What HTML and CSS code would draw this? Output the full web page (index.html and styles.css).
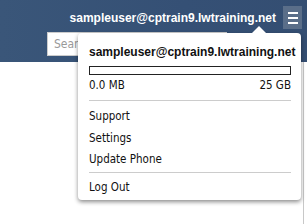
FILE: index.html
```html
<!DOCTYPE html>
<html>
<head>
<meta charset="utf-8">
<link rel="stylesheet" href="styles.css">
</head>
<body>
<header class="topbar">
  <div class="toprow">
    <span class="user">sampleuser@cptrain9.lwtraining.net</span>
    <button class="burger" aria-label="Menu">
      <span></span><span></span><span></span>
    </button>
  </div>
  <div class="searchrow">
    <input class="search" type="text" placeholder="Search">
  </div>
</header>
<main class="content"></main>

<div class="dropdown">
  <div class="arrow"></div>
  <div class="email">sampleuser@cptrain9.lwtraining.net</div>
  <div class="quota"><div class="fill" style="width:0%"></div></div>
  <div class="quota-labels"><span>0.0 MB</span><span>25 GB</span></div>
  <hr class="divider first">
  <a class="item">Support</a>
  <a class="item">Settings</a>
  <a class="item">Update Phone</a>
  <hr class="divider second">
  <a class="item">Log Out</a>
</div>
</body>
</html>
```

FILE: styles.css
```css
html, body {
  margin: 0;
  padding: 0;
  height: 100%;
  background: #fff;
  font-family: "DejaVu Sans Condensed", "DejaVu Sans", Verdana, sans-serif;
  overflow: hidden;
}

.topbar {
  height: 62px;
  background: linear-gradient(90deg, #3a5679 0%, #355075 60%, #344e72 100%);
  box-sizing: border-box;
  padding: 6px 5px 0 47px;
}

.toprow {
  display: flex;
  justify-content: flex-end;
  align-items: center;
  gap: 7px;
  height: 23px;
}

.user {
  color: #fff;
  font-family: "Liberation Sans", Arial, sans-serif;
  font-weight: bold;
  font-size: 12px;
}

.burger {
  width: 19px;
  height: 23px;
  background: #5a6e89;
  border: none;
  padding: 0;
  display: flex;
  flex-direction: column;
  justify-content: center;
  align-items: center;
  gap: 3px;
}
.burger span {
  display: block;
  width: 10px;
  height: 2px;
  background: #fff;
}

.searchrow {
  margin-top: 3px;
}

.search {
  width: 180px;
  height: 24px;
  box-sizing: border-box;
  border: 1px solid #ccc;
  padding: 0 6px;
  font-size: 12px;
  font-family: "DejaVu Sans Condensed", "DejaVu Sans", sans-serif;
  color: #999;
}
.search::placeholder { color: #999; }

.content {
  position: absolute;
  top: 62px;
  right: 0;
  bottom: 0;
  width: 3px;
  border-left: 1px solid #c8c8c8;
}

.dropdown {
  position: absolute;
  left: 78px;
  top: 33px;
  width: 223px;
  height: 167px;
  box-sizing: border-box;
  background: #fff;
  border-radius: 4px;
  box-shadow: 0 2px 4px rgba(0,0,0,0.45);
  padding: 10px 10px 0 11px;
  font-size: 11.5px;
  color: #111;
}

.arrow {
  position: absolute;
  top: -7px;
  left: 174px;
  width: 0;
  height: 0;
  border-left: 7px solid transparent;
  border-right: 7px solid transparent;
  border-bottom: 7px solid #fff;
}

.email {
  font-family: "Liberation Sans", Arial, sans-serif;
  font-weight: bold;
  font-size: 12px;
  line-height: 18px;
  color: #111;
}

.quota {
  margin-top: 5px;
  height: 9px;
  border: 1px solid #222;
  box-sizing: border-box;
  background: #fff;
}

.quota-labels {
  display: flex;
  justify-content: space-between;
  line-height: 16px;
  margin-top: 2px;
}

.divider {
  border: none;
  border-top: 1px solid #ccc;
}
.divider.first { margin: 7px 0 5px; }
.divider.second { margin: 1px 0 4px; }

.item {
  display: block;
  line-height: 21.5px;
  color: #111;
}
```
